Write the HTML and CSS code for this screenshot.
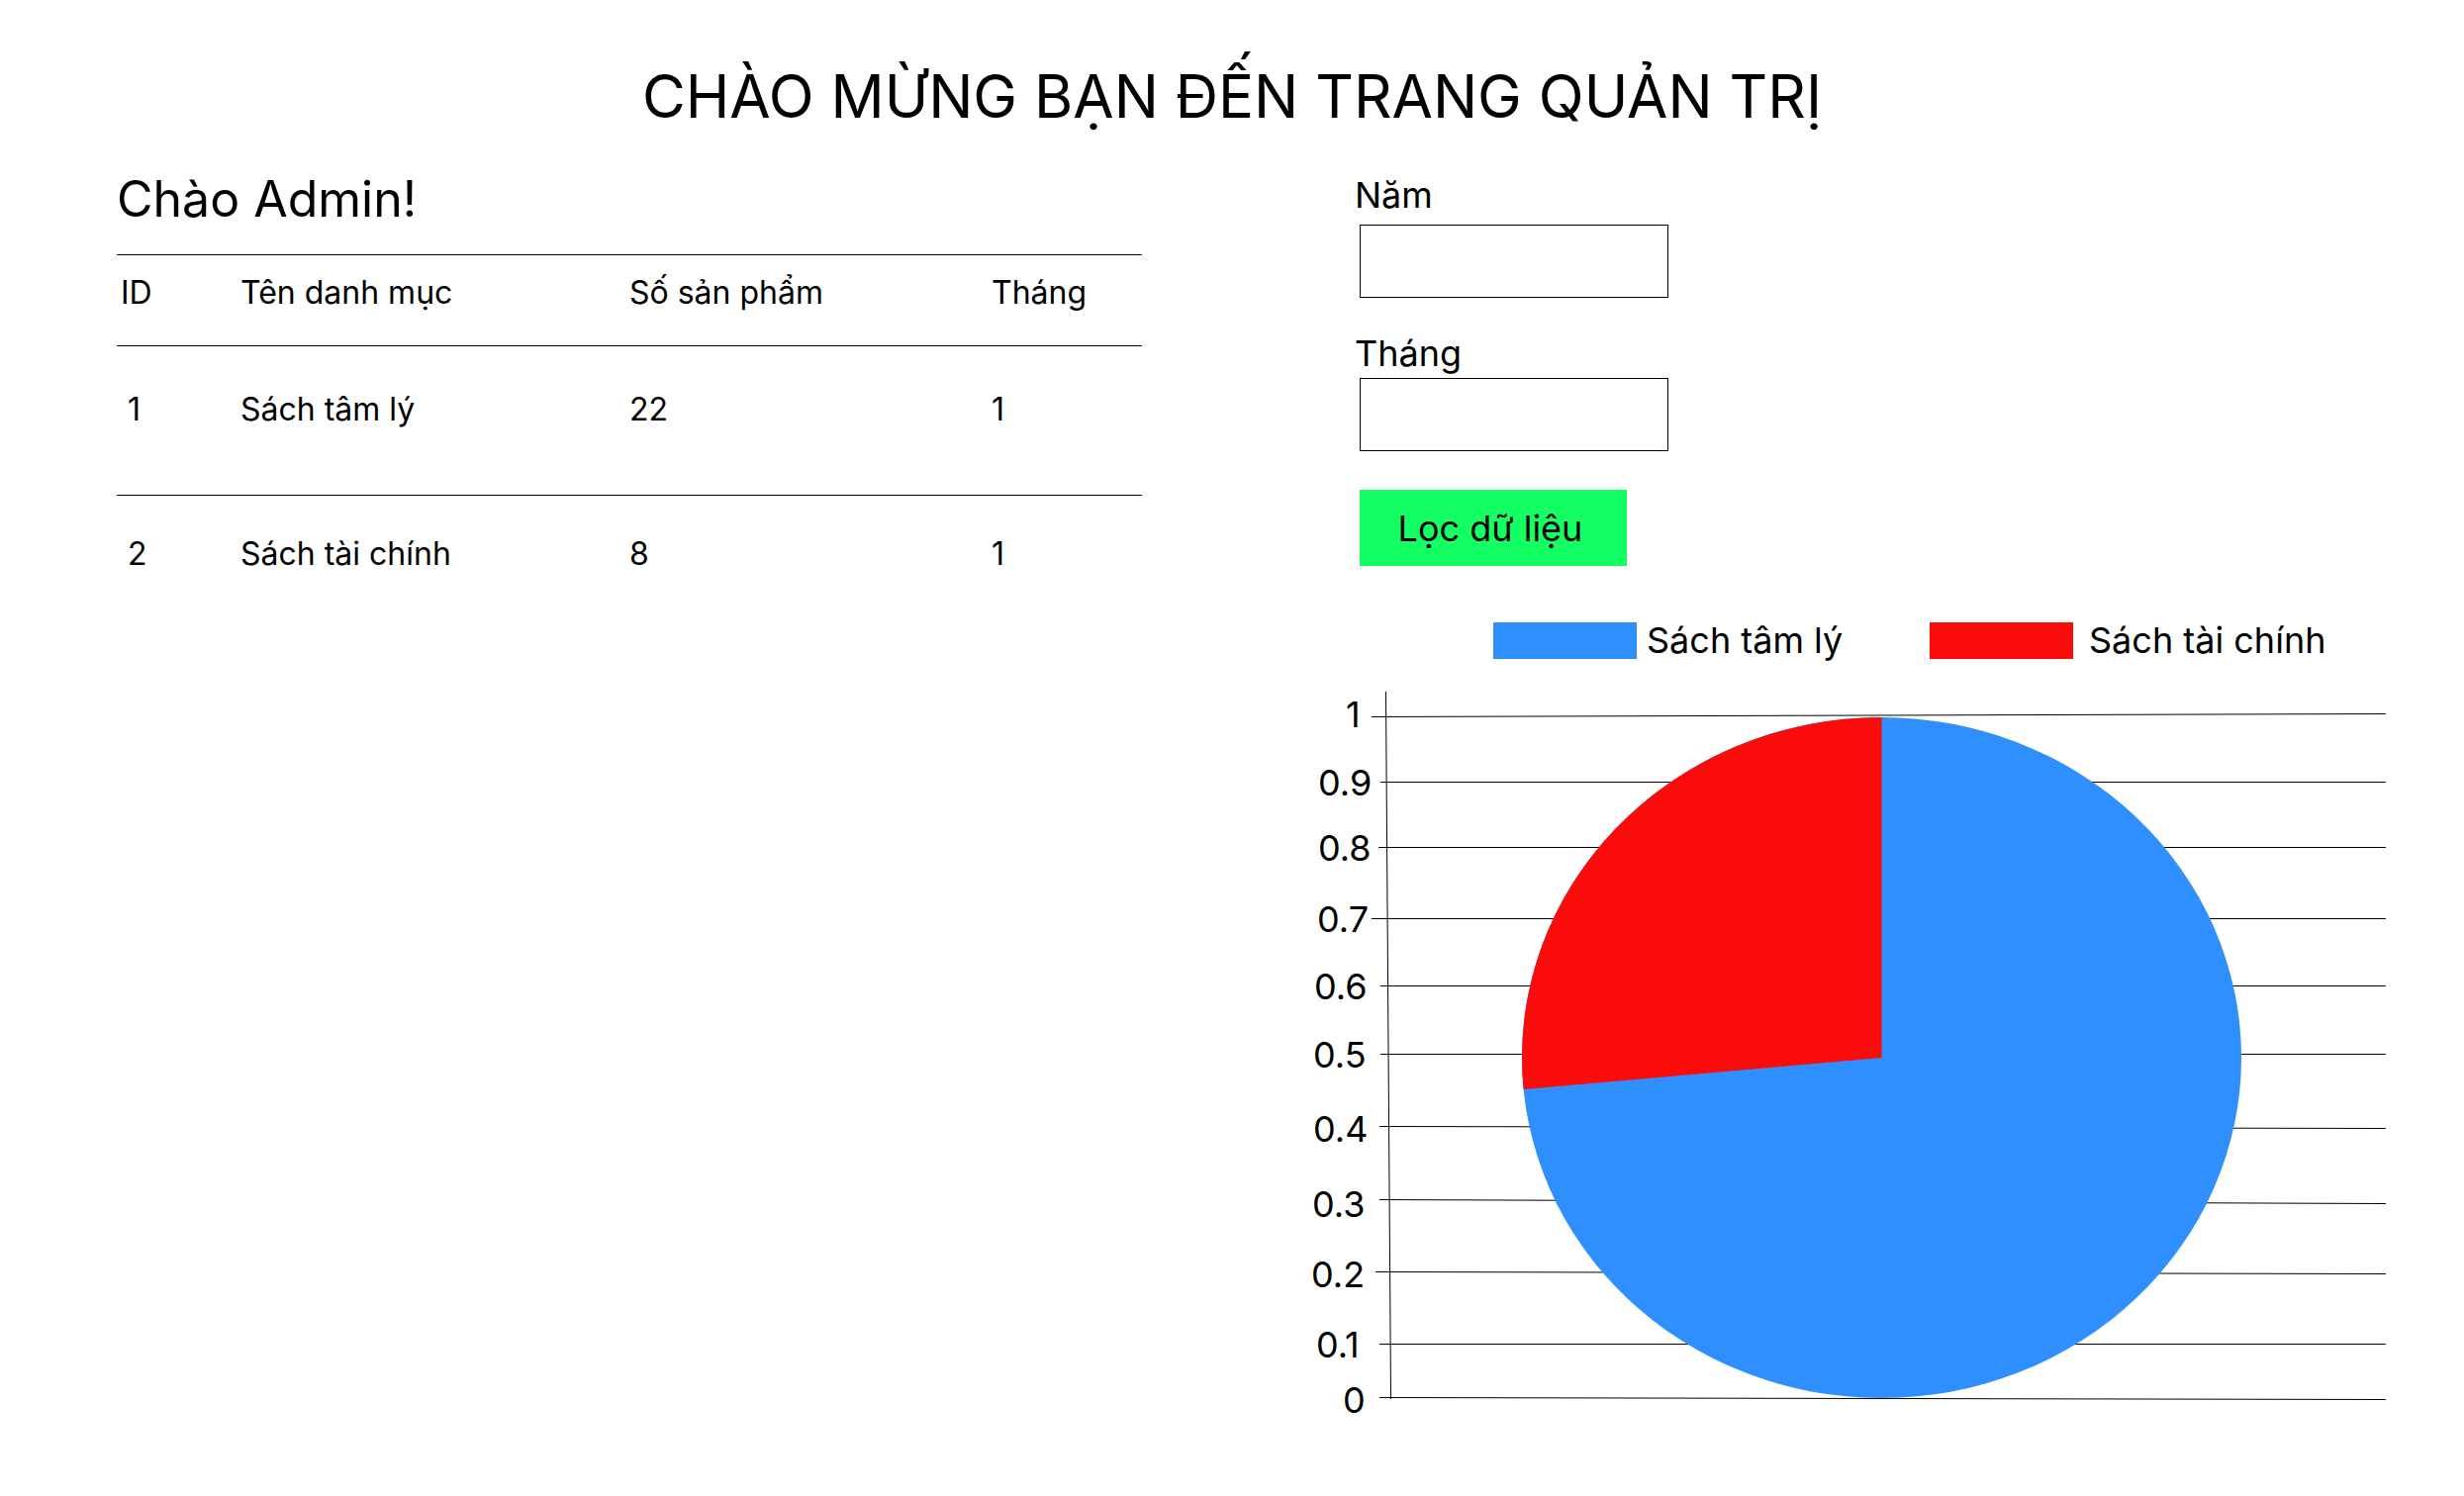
FILE: index.html
```html
<!DOCTYPE html>
<html lang="vi">
<head>
  <meta charset="utf-8">
  <meta name="viewport" content="width=device-width, initial-scale=1">
  <title>Trang quản trị</title>
  <link rel="stylesheet" href="styles.css">
</head>
<body>
  <header class="page-header">
    <h1 class="page-title">CHÀO MỪNG BẠN ĐẾN TRANG QUẢN TRỊ</h1>
  </header>

  <main class="dashboard">
    <section class="summary">
      <h2 class="greeting">Chào Admin!</h2>
      <table class="categories">
        <colgroup>
          <col class="col-id">
          <col class="col-name">
          <col class="col-count">
          <col>
        </colgroup>
        <thead>
          <tr>
            <th scope="col">ID</th>
            <th scope="col">Tên danh mục</th>
            <th scope="col">Số sản phẩm</th>
            <th scope="col">Tháng</th>
          </tr>
        </thead>
        <tbody>
          <tr>
            <td>1</td>
            <td>Sách tâm lý</td>
            <td>22</td>
            <td>1</td>
          </tr>
          <tr>
            <td>2</td>
            <td>Sách tài chính</td>
            <td>8</td>
            <td>1</td>
          </tr>
        </tbody>
      </table>
    </section>

    <section class="report">
      <form class="filter">
        <div class="field field-year">
          <label for="year">Năm</label>
          <input class="field-input" type="text" id="year" name="year">
        </div>
        <div class="field field-month">
          <label for="month">Tháng</label>
          <input class="field-input" type="text" id="month" name="month">
        </div>
        <button class="filter-button" type="button">Lọc dữ liệu</button>
      </form>

      <ul class="legend">
        <li class="legend-item"><span class="swatch swatch-blue"></span>Sách tâm lý</li>
        <li class="legend-item legend-item-wide"><span class="swatch swatch-red"></span>Sách tài chính</li>
      </ul>

      <svg class="chart" viewBox="0 0 1091 760">
        <g class="chart-lines">
          <line x1="80.5" y1="9" x2="85.5" y2="724"/>
          <line x1="66" y1="34.5" x2="1091" y2="31.5"/>
          <line x1="75" y1="100.5" x2="1091" y2="100.5"/>
          <line x1="73" y1="166.5" x2="1091" y2="166.5"/>
          <line x1="66" y1="238.5" x2="1091" y2="238.5"/>
          <line x1="75" y1="306.5" x2="1091" y2="306.5"/>
          <line x1="75" y1="375.5" x2="1091" y2="375.5"/>
          <line x1="74" y1="448.5" x2="1091" y2="450.5"/>
          <line x1="74" y1="522.5" x2="1091" y2="526.5"/>
          <line x1="70" y1="595.5" x2="1091" y2="597.5"/>
          <line x1="74" y1="668.5" x2="1091" y2="668.5"/>
          <line x1="74" y1="722.5" x2="1091" y2="724.5"/>
        </g>
        <ellipse class="slice-blue" cx="581.5" cy="379" rx="363.5" ry="344"/>
        <path class="slice-red" d="M581.5 379V35A363.5 344 0 0 0 219.6 411Z"/>
        <g class="chart-labels">
          <text x="40" y="45">1</text>
          <text x="12" y="114">0.9</text>
          <text x="12" y="180">0.8</text>
          <text x="11" y="252">0.7</text>
          <text x="8" y="320">0.6</text>
          <text x="7" y="389">0.5</text>
          <text x="7" y="464">0.4</text>
          <text x="6" y="540">0.3</text>
          <text x="5" y="611">0.2</text>
          <text x="10" y="682">0.1</text>
          <text x="37" y="738">0</text>
        </g>
      </svg>
    </section>
  </main>
</body>
</html>
```
FILE: styles.css
```css
* {
  box-sizing: border-box;
}

body {
  margin: 0;
  background: #fff;
  color: #000;
  font-family: Inter, "Liberation Sans", sans-serif;
  font-size: 36px;
  line-height: 44px;
}

h1,
h2,
ul {
  margin: 0;
  padding: 0;
  font-weight: 400;
}

.page-header {
  padding: 61px 32px 38px;
  text-align: center;
}

.page-title {
  font-size: 60px;
  line-height: 72px;
}

.dashboard {
  display: grid;
  grid-template-columns: 1036fr 1091fr;
  column-gap: 166px;
  align-items: start;
  padding: 0 79px 0 118px;
}

/* Category table */

.greeting {
  margin-bottom: 26px;
  font-size: 50px;
  line-height: 60px;
}

.categories {
  width: 100%;
  table-layout: fixed;
  border-spacing: 0;
  font-size: 32px;
  line-height: 38px;
  text-align: left;
}

.col-id {
  width: 125px;
}

.col-name {
  width: 393px;
}

.col-count {
  width: 366px;
}

.categories th {
  padding: 19px 0 34px;
  border-top: 1px solid #000;
  font-weight: 400;
}

.categories td {
  padding: 45px 0 67px;
  border-top: 1px solid #000;
}

.categories tr:last-child td {
  padding-top: 40px;
}

.categories th:first-child {
  padding-left: 4px;
}

.categories td:first-child {
  padding-left: 11px;
}

/* Filter form */

.filter {
  padding: 4px 0 0 49px;
}

.field {
  display: flex;
  flex-direction: column;
  align-items: flex-start;
}

.field-year {
  gap: 8px;
  margin-bottom: 34px;
}

.field-month {
  gap: 3px;
  margin-bottom: 39px;
}

.field-input,
.filter-button {
  margin: 0 0 0 5px;
  border-radius: 0;
  color: inherit;
  font: inherit;
}

.field-input {
  width: 312px;
  height: 74px;
  padding: 0 16px;
  border: 1px solid #000;
  background: #fff;
}

.filter-button {
  display: block;
  width: 270px;
  height: 77px;
  padding: 0 6px 0 0;
  border: 0;
  background: #14ff63;
}

/* Chart */

.legend {
  display: grid;
  grid-template-columns: 441px 1fr;
  margin: 57px 0 24px;
  padding-left: 189px;
  line-height: 37px;
  list-style: none;
}

.legend-item {
  display: flex;
  gap: 10px;
  white-space: nowrap;
}

.legend-item-wide {
  gap: 16px;
}

.swatch {
  width: 145px;
  height: 37px;
}

.swatch-blue {
  background: #2f8fff;
}

.swatch-red {
  background: #fc0b0b;
}

.chart {
  display: block;
  width: 100%;
  height: auto;
}

.chart-lines {
  stroke: #000;
  stroke-width: 1px;
}

.chart-labels {
  font-size: 36px;
}

.slice-blue {
  fill: #2f8fff;
}

.slice-red {
  fill: #fc0b0b;
}

@media (max-width: 1900px) {
  .dashboard {
    grid-template-columns: 1fr;
    row-gap: 48px;
    padding: 0 48px;
  }
}
```
